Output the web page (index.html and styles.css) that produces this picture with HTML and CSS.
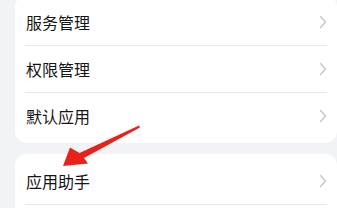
FILE: index.html
```html
<!DOCTYPE html>
<html lang="zh-CN">
  <head>
    <meta charset="UTF-8" />
    <meta name="viewport" content="width=device-width, initial-scale=1.0" />
    <title>应用设置</title>
    <link rel="stylesheet" href="styles.css">
  </head>
  <body>
    <main class="page">
      <!-- First group -->
      <section class="card card-first">
        <div class="row">
          <span class="row-label">服务管理</span>
          <svg class="chevron" viewBox="0 0 8 14" width="8" height="14"><path d="M1.5 1.5 L6.5 7 L1.5 12.5" /></svg>
        </div>
        <div class="row">
          <span class="row-label">权限管理</span>
          <svg class="chevron" viewBox="0 0 8 14" width="8" height="14"><path d="M1.5 1.5 L6.5 7 L1.5 12.5" /></svg>
        </div>
        <div class="row row-last">
          <span class="row-label">默认应用</span>
          <svg class="chevron" viewBox="0 0 8 14" width="8" height="14"><path d="M1.5 1.5 L6.5 7 L1.5 12.5" /></svg>
        </div>
      </section>

      <!-- Second group, continues below the fold -->
      <section class="card card-open">
        <div class="row">
          <span class="row-label">应用助手</span>
          <svg class="chevron" viewBox="0 0 8 14" width="8" height="14"><path d="M1.5 1.5 L6.5 7 L1.5 12.5" /></svg>
        </div>
      </section>

      <!-- Annotation arrow -->
      <svg class="arrow" viewBox="0 0 337 208" width="337" height="208">
        <path d="M139 125.5 L140 127.5 L84 158 L88 163.5 L63 166 L70 147.5 L79.5 153 Z" />
      </svg>
    </main>
  </body>
</html>
```

FILE: styles.css
```css
html,
body {
  margin: 0;
  height: 100%;
  overflow: hidden;
  background: #f1f3f6;
}

.page {
  position: relative;
  display: flex;
  flex-direction: column;
  gap: 11px;
  padding-left: 15px;
  font-family: "Noto Sans CJK SC", "Noto Sans", sans-serif;
}

.card {
  width: 322px;
  padding: 4px 0;
  background: #ffffff;
  border-radius: 12px;
}

.card-first {
  margin-top: -5px;
}

.card-open {
  padding-bottom: 40px;
}

.row {
  display: flex;
  align-items: center;
  justify-content: space-between;
  height: 46px;
  margin: 0 10px;
  border-bottom: 1px solid #e9e9ec;
}

.row-last {
  border-bottom: none;
}

.row-label {
  font-size: 16px;
  color: #151515;
  line-height: 1;
  padding-left: 1px;
}

.chevron {
  fill: none;
  stroke: #c6c6c9;
  stroke-width: 1.4;
  stroke-linecap: round;
  stroke-linejoin: round;
}

.arrow {
  position: absolute;
  top: 0;
  left: 0;
  fill: #e8221b;
  pointer-events: none;
}
```
